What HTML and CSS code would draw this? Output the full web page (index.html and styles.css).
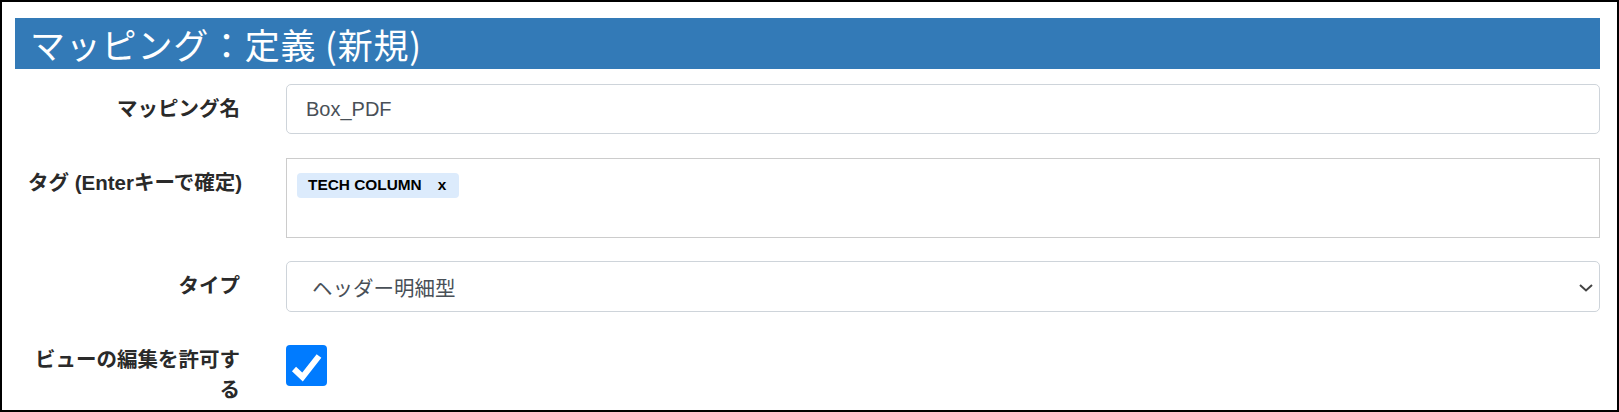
FILE: index.html
```html
<!DOCTYPE html>
<html lang="ja">
<head>
<meta charset="utf-8">
<title>マッピング：定義 (新規)</title>
<link rel="stylesheet" href="styles.css">
</head>
<body>
<div class="page">
  <h3 class="title">マッピング：定義 (新規)</h3>

  <div class="row row-name">
    <label class="label">マッピング名</label>
    <div class="control input">Box_PDF</div>
  </div>

  <div class="row row-tags">
    <label class="label nowrap">タグ (Enterキーで確定)</label>
    <div class="control tagbox">
      <span class="tag"><span class="tag-text">TECH COLUMN</span><span class="tag-x">x</span></span>
    </div>
  </div>

  <div class="row row-type">
    <label class="label">タイプ</label>
    <div class="control select">
      <span class="select-text">ヘッダー明細型</span>
      <svg class="chevron" width="14" height="8" viewBox="0 0 14 8"><polyline points="1,1 7,6.5 13,1" fill="none" stroke="#444" stroke-width="2"/></svg>
    </div>
  </div>

  <div class="row row-check">
    <label class="label">ビューの編集を許可する</label>
    <div class="check-wrap">
      <span class="checkbox">
        <svg width="41" height="41" viewBox="0 0 41 41"><polyline points="8,24 16.5,32 33,11" fill="none" stroke="#fff" stroke-width="6" stroke-linejoin="miter"/></svg>
      </span>
    </div>
  </div>
</div>
</body>
</html>
```

FILE: styles.css
```css
html, body {
  margin: 0;
  padding: 0;
  background: #fff;
}

.page {
  box-sizing: border-box;
  width: 1619px;
  height: 412px;
  border: 2px solid #000;
  padding: 16px 17px 0 13px;
  overflow: hidden;
  font-family: "Liberation Sans", "Noto Sans CJK JP", sans-serif;
  color: #212529;
}

.title {
  margin: 0 0 15px 0;
  height: 51px;
  line-height: 51px;
  padding-left: 15px;
  background: #337ab7;
  color: #fff;
  font-size: 35px;
  font-weight: normal;
  letter-spacing: 0.8px;
  font-family: "Noto Sans CJK JP", "Liberation Sans", sans-serif;
}

.row {
  display: flex;
  align-items: flex-start;
}

.row-name { margin-bottom: 24px; }
.row-tags { margin-bottom: 23px; }
.row-type { margin-bottom: 23px; }

.label {
  box-sizing: border-box;
  width: 225px;
  padding-left: 13px;
  padding-top: 10px;
  margin-right: 46px;
  text-align: right;
  font-size: 20.5px;
  line-height: 30px;
  font-weight: bold;
  color: #2a2a2a;
}

.nowrap {
  white-space: nowrap;
}

.control {
  box-sizing: border-box;
  flex: 1;
  border: 1px solid #ced4da;
  border-radius: 5px;
  color: #495057;
  font-size: 20px;
}

.input {
  height: 50px;
  line-height: 48px;
  padding-left: 19px;
}

.tagbox {
  height: 80px;
  border-color: #cccccc;
  border-radius: 0;
  padding: 13px 10px;
}

.tag {
  display: inline-flex;
  align-items: center;
  height: 25px;
  padding: 0 13px 0 11px;
  background: #dcebfc;
  border-radius: 4px;
  color: #000;
  font-weight: bold;
  font-size: 15.4px;
}

.tag-x {
  margin-left: 16px;
}

.select {
  height: 51px;
  display: flex;
  align-items: center;
  justify-content: space-between;
  padding: 0 6px 0 25px;
}

.select-text {
  font-family: "Noto Sans CJK JP", sans-serif;
  font-size: 20.5px;
}

.chevron {
  margin-top: 2px;
}

.check-wrap {
  padding-top: 10px;
}

.checkbox {
  display: block;
  width: 41px;
  height: 41px;
  background: #007bff;
  border-radius: 4px;
  overflow: hidden;
}

.checkbox svg {
  display: block;
}
```
